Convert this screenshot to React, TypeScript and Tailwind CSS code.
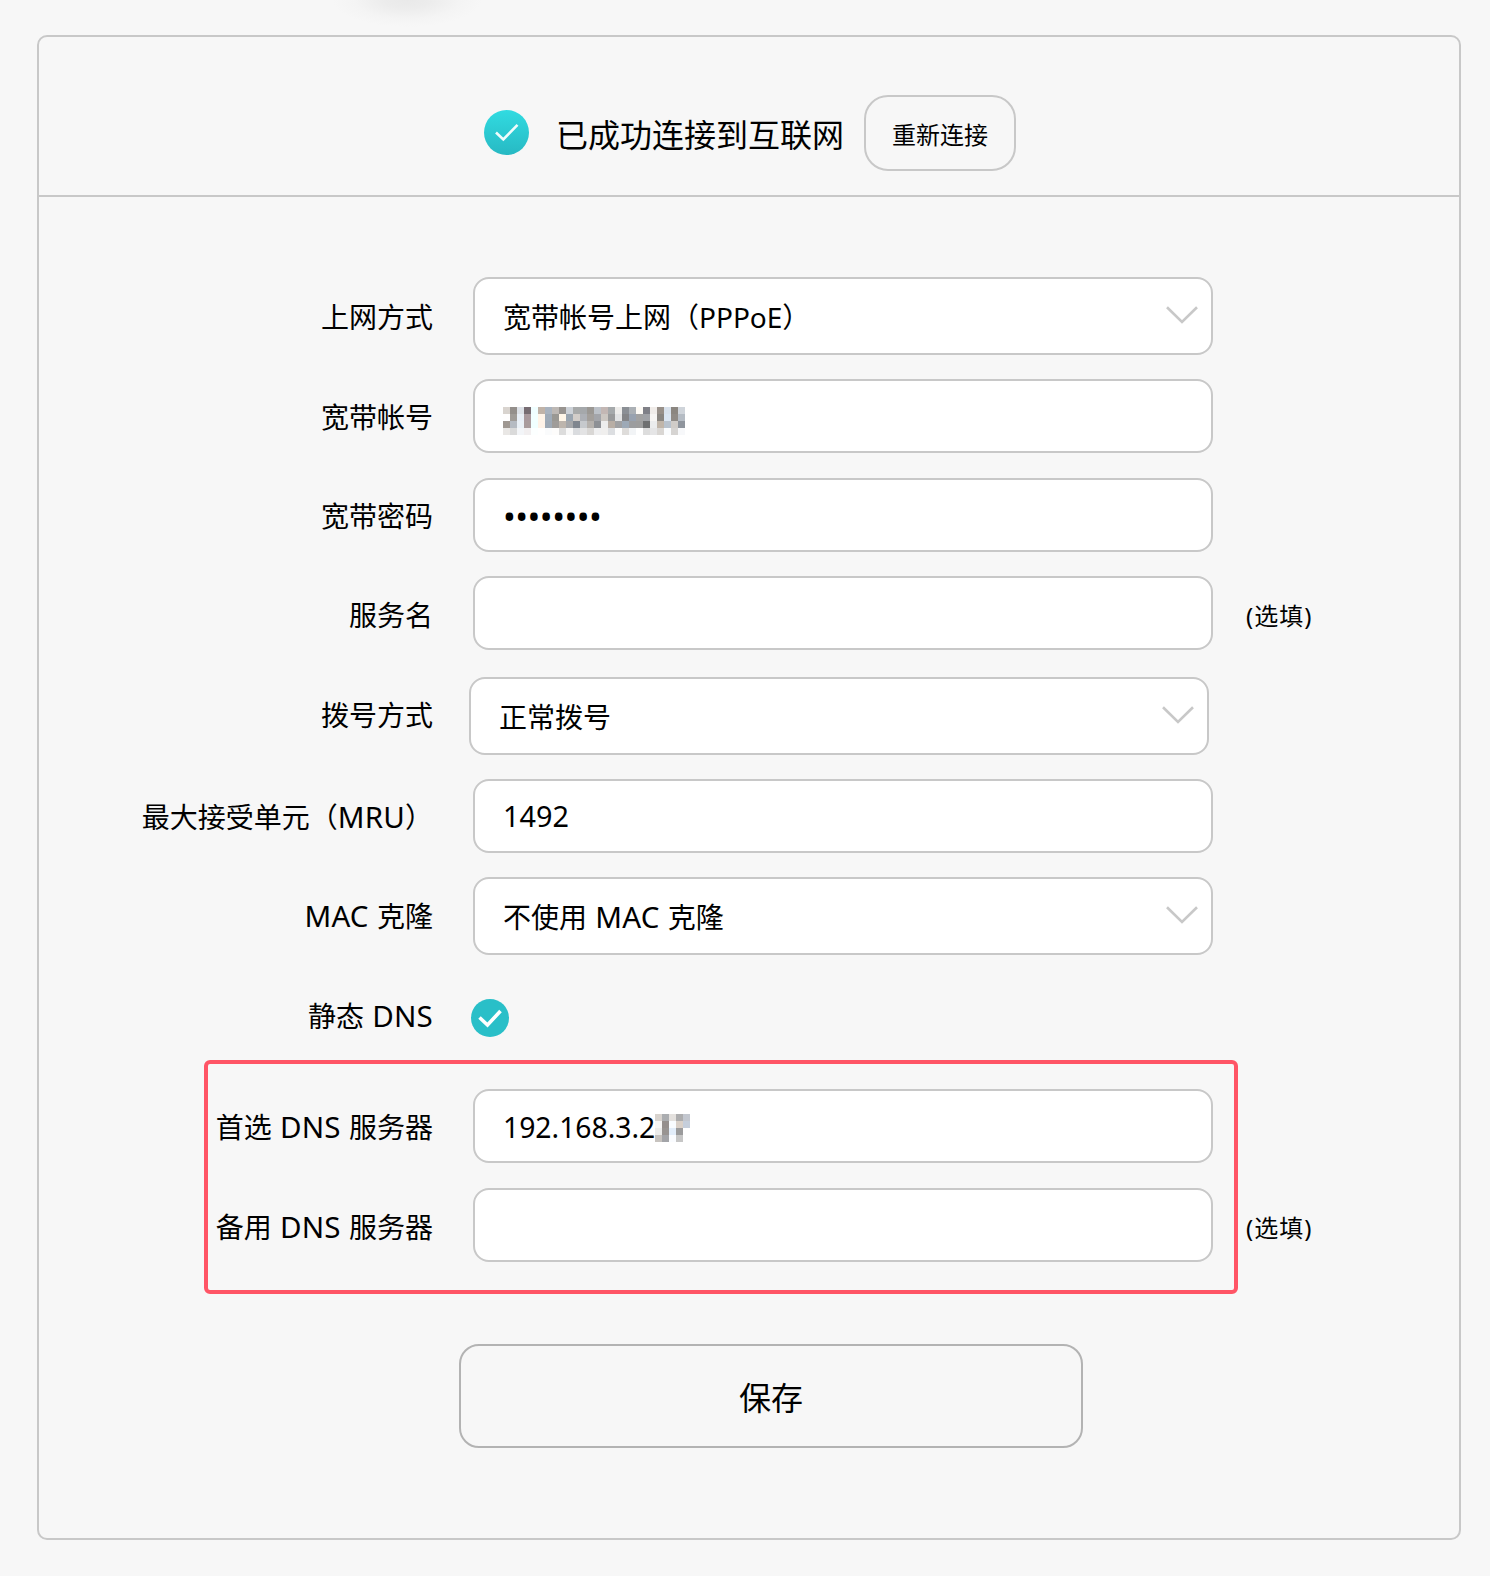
import type { ReactNode } from "react"

// Colours of the pixelated part of the account name, row by row
const accountMosaic = [
  "d9d4cf 948f8b dde1e7 776c72 f0feff c0b3a8 a9b3bf bdb8b4 989490 cdd2d8 a8aaaa a5a8ab 9b9894 bcc1c8 c3b7b4 a5a9ab eeedeb 8b8f95 abb0b5 fdfaf5 7f8087 f0ece9 989089 d9e2ec 8b8680 cfd4da",
  "fffefe a09c98 e8eef6 a9999d f2ffff fff4e8 9fabb8 9a9893 fff6e8 9aa5b0 d2cdc9 adb0b6 a39f9b a3a5aa ccc7c2 999a9b e2e3e4 848588 98a2b0 a2a2a2 a0a2a6 f7f5f3 8a8681 dbe6f2 908b86 b5bcc4",
  "9f9892 b6bbc2 eaf0f6 a99b9c f1ffff fff3e8 9ea9b5 9f9c99 bdb5ad a5a7aa 7f868f c6c9cd b5b1ad 8d9095 ededed b8aea5 a0a1a3 9da9b6 9c9d9f 9d9d9d 6e6f70 ebeced c0b5a9 b8c2cd d0ccc8 8f959d",
  "e9e7e5 dadada f3f5f8 f2eff0 fcffff ffffff fafbfc fdfcfb dcdcdc f8f8f8 dadcdf e3e3e4 d9d7d5 efeff0 f0efee dcdee1 fdfdfd dedcda f2f4f6 ffffff dddddd e5e5e6 d9d6d3 fafcfe d6d4d2 f7f8fa",
]

const dnsMosaic = [
  "d8d3ce abadb0 e4e1de adadae c3c7cf",
  "f7f6f5 958f8d f9fcff d9d0c8 c5cedb",
  "ececeb 989492 e2edfa 9b9b9c ffffff",
  "c7c3bf a3a4a8 fafcff c6c6c6 ffffff",
]

function Mosaic({ rows, className }: { rows: string[]; className: string }) {
  const cols = rows[0].split(" ").length
  return (
    <svg
      width={cols * 7}
      height={rows.length * 7}
      className={className}
      shapeRendering="crispEdges"
    >
      {rows.map((row, y) =>
        row
          .split(" ")
          .map((c, x) => <rect key={`${x}-${y}`} x={x * 7} y={y * 7} width="7" height="7" fill={`#${c}`} />),
      )}
    </svg>
  )
}

function Chevron() {
  return (
    <svg width="32" height="18" viewBox="0 0 32 18" fill="none" className="mr-[13px] mb-[2px] shrink-0">
      <path d="M1 1.2 L16 16 L31 1.2" stroke="#c8c8c8" strokeWidth="2.6" />
    </svg>
  )
}

// Latin abbreviation inside a Chinese label
function Abbr({ children }: { children: ReactNode }) {
  return <span className="text-[29.5px] leading-none tracking-[0.2px]">{children}</span>
}

interface RowProps {
  label: ReactNode
  className?: string
  labelClass?: string
  children: ReactNode
  hint?: string
}

function Row({ label, className = "", labelClass = "pt-px", children, hint }: RowProps) {
  return (
    <div className={`flex items-center ${className}`}>
      <label className={`w-[394px] shrink-0 text-right whitespace-pre ${labelClass}`}>{label}</label>
      {children}
      {hint && <span className="ml-[33px] pt-[5px] text-2xl tracking-[1px]">{hint}</span>}
    </div>
  )
}

function Input({ children }: { children?: ReactNode }) {
  return (
    <div className="ml-10 flex h-[74px] w-[740px] shrink-0 items-center rounded-2xl border-2 border-[#c8c8c8] bg-white pl-7">
      {children}
    </div>
  )
}

function Select({ value, className = "ml-10" }: { value: ReactNode; className?: string }) {
  return (
    <div
      className={`flex h-[78px] w-[740px] shrink-0 items-center justify-between rounded-2xl border-2 border-[#c8c8c8] bg-white pl-7 ${className}`}
    >
      <span className="pt-px">{value}</span>
      <Chevron />
    </div>
  )
}

export default function App() {
  return (
    <div className="relative h-[1576px] w-[1490px] overflow-hidden bg-[#f7f7f7] pt-[35px] pl-[37px] font-['Noto_Sans','Noto_Sans_CJK_SC',sans-serif] text-[28px] leading-10 text-black [word-spacing:1px]">
      <div className="absolute -top-[27px] left-[332px] h-[54px] w-[150px] bg-[radial-gradient(closest-side,#e9e9e9,#ececec_30%,#f4f4f4_70%,#f7f7f7)]" />

      <div className="relative h-[1505px] w-[1424px] rounded-[10px] border-2 border-[#c8c8c8]">
        <div className="flex h-[160px] items-start border-b-2 border-[#c8c8c8] pt-[58px] pl-[445px]">
          <svg width="45" height="45" viewBox="0 0 45 45" fill="none" className="mt-[15px]">
            <defs>
              <linearGradient id="ok" x1="0" y1="0" x2="0" y2="1">
                <stop stopColor="#31dbe1" />
                <stop offset="1" stopColor="#27b9c3" />
              </linearGradient>
            </defs>
            <circle cx="22.5" cy="22.5" r="22.5" fill="url(#ok)" />
            <path d="M12 22.5 L19.3 29.5 L33.5 14.8" stroke="#f0fcfc" strokeWidth="2.6" />
          </svg>
          <span className="mt-5 ml-[27px] text-[32px]">已成功连接到互联网</span>
          <button className="ml-5 h-[76px] w-[152px] rounded-3xl border-2 border-[#c8c8c8] pt-[3px] text-2xl">
            重新连接
          </button>
        </div>

        <Row label="上网方式" className="mt-20">
          <Select value="宽带帐号上网（PPPoE）" />
        </Row>
        <Row label="宽带帐号" className="mt-6">
          <Input>
            <Mosaic rows={accountMosaic} className="mt-[10px]" />
          </Input>
        </Row>
        <Row label="宽带密码" className="mt-[25px]">
          <Input>
            <span className="pt-px text-[34px] tracking-[-0.5px]">••••••••</span>
          </Input>
        </Row>
        <Row label="服务名" className="mt-6" labelClass="pt-[3px]" hint="(选填)">
          <Input />
        </Row>
        <Row label="拨号方式" className="mt-[27px]" labelClass="pb-[3px]">
          <Select value="正常拨号" className="ml-9" />
        </Row>
        <Row
          label={
            <>
              最大接受单元（<Abbr>MRU</Abbr>）
            </>
          }
          className="mt-6"
        >
          <Input>
            <span className="text-[28.8px]">1492</span>
          </Input>
        </Row>
        <Row
          label={
            <>
              <Abbr>MAC</Abbr> 克隆
            </>
          }
          className="mt-6"
          labelClass="pb-px"
        >
          <Select
            value={
              <>
                不使用 <Abbr>MAC</Abbr> 克隆
              </>
            }
          />
        </Row>
        <Row
          label={
            <>
              静态 <Abbr>DNS</Abbr>
            </>
          }
          className="mt-11 h-[38px]"
          labelClass="pb-1"
        >
          <svg width="38" height="38" viewBox="0 0 38 38" fill="none" className="ml-[38px]">
            <circle cx="19" cy="19" r="19" fill="#29bfc8" />
            <path d="M8.5 18.5 L16.5 26 L29.5 12" stroke="#fff" strokeWidth="3.6" />
          </svg>
        </Row>

        <div className="relative mt-[52px]">
          <Row
            label={
              <>
                首选 <Abbr>DNS</Abbr> 服务器
              </>
            }
          >
            <Input>
              <span className="pt-px text-[28.3px]">192.168.3.2</span>
              <Mosaic rows={dnsMosaic} className="mt-[4px]" />
            </Input>
          </Row>
          <Row
            label={
              <>
                备用 <Abbr>DNS</Abbr> 服务器
              </>
            }
            className="mt-[25px]"
            labelClass="pt-[3px]"
            hint="(选填)"
          >
            <Input />
          </Row>
          <div className="absolute -top-[29px] left-[165px] h-[234px] w-[1034px] rounded-md border-4 border-[#ff5566]" />
        </div>

        <button className="mt-[82px] ml-[420px] block h-[104px] w-[624px] rounded-[20px] border-2 border-[#b3b3b3] pt-[3px] text-[32px]">
          保存
        </button>
      </div>
    </div>
  )
}
